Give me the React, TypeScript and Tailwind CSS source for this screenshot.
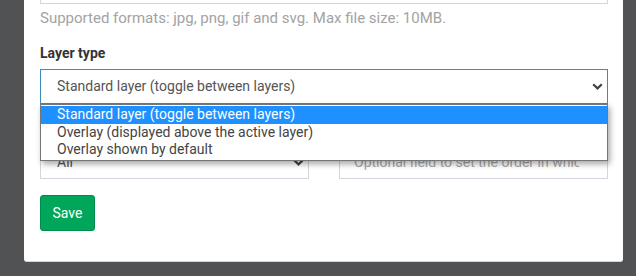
import React from "react";

function Chevron({ className = "" }: { className?: string }) {
  return (
    <svg width="11" height="7" viewBox="0 0 11 7" className={className}>
      <path d="M1.2 1.2 L5.5 5.4 L9.8 1.2" fill="none" stroke="#444" strokeWidth="2.2" />
    </svg>
  );
}

export default function App() {
  return (
    <div className="w-[636px] h-[276px] bg-[#505254] overflow-hidden" style={{ fontFamily: "Roboto, 'Liberation Sans', sans-serif" }}>
      <div className="ml-[24px] w-[599px] h-[262px] bg-white border-b border-[#d2d6de] rounded-b-[3px] px-[16px] pr-[15px] relative">
        <div className="h-[4px] border-x border-b border-[#d2d6de]" />
        <div className="mt-[4px] text-[15px] leading-[20px] text-[#a3a3a3]">
          Supported formats: jpg, png, gif and svg. Max file size: 10MB.
        </div>
        <div className="mt-[15px] text-[14px] leading-[20px] font-bold text-[#333]">Layer type</div>
        <div className="relative mt-[6px]">
          <div className="h-[35px] border border-[#3c8dbc] flex items-center justify-between pl-[16px] pr-[4px] text-[14px] text-[#555]">
            <span>Standard layer (toggle between layers)</span>
            <Chevron />
          </div>
          <div className="absolute left-0 top-[35px] w-[568px] z-10 bg-white border border-[#767676] shadow-[2px_3px_6px_rgba(0,0,0,0.35)] text-[14px] leading-[17px] text-[#444] pt-[1px] pb-[2px]">
            <div className="bg-[#1e90ff] text-white pl-[16px] h-[18px]">Standard layer (toggle between layers)</div>
            <div className="pl-[16px]">Overlay (displayed above the active layer)</div>
            <div className="pl-[16px]">Overlay shown by default</div>
          </div>
        </div>
        <div className="grid grid-cols-2 gap-[30px] mt-[15px]">
          <div>
            <div className="text-[14px] leading-[20px] font-bold text-[#333]">Visible for</div>
            <div className="mt-[6px] h-[34px] border border-[#d2d6de] flex items-center justify-between pl-[16px] pr-[4px] text-[14px] text-[#555]">
              <span>All</span>
              <Chevron />
            </div>
          </div>
          <div>
            <div className="text-[14px] leading-[20px] font-bold text-[#333]">Order</div>
            <div className="mt-[6px] h-[34px] border border-[#d2d6de] flex items-center pl-[14px] pr-[28px] text-[14px] text-[#a8a8a8] overflow-hidden whitespace-nowrap">
              <span className="overflow-hidden">Optional field to set the order in which layers are shown</span>
            </div>
          </div>
        </div>
        <button className="mt-[16px] h-[36px] w-[55px] bg-[#00a65a] border border-[#008d4c] rounded-[3px] text-white text-[14px]">
          Save
        </button>
      </div>
    </div>
  );
}
